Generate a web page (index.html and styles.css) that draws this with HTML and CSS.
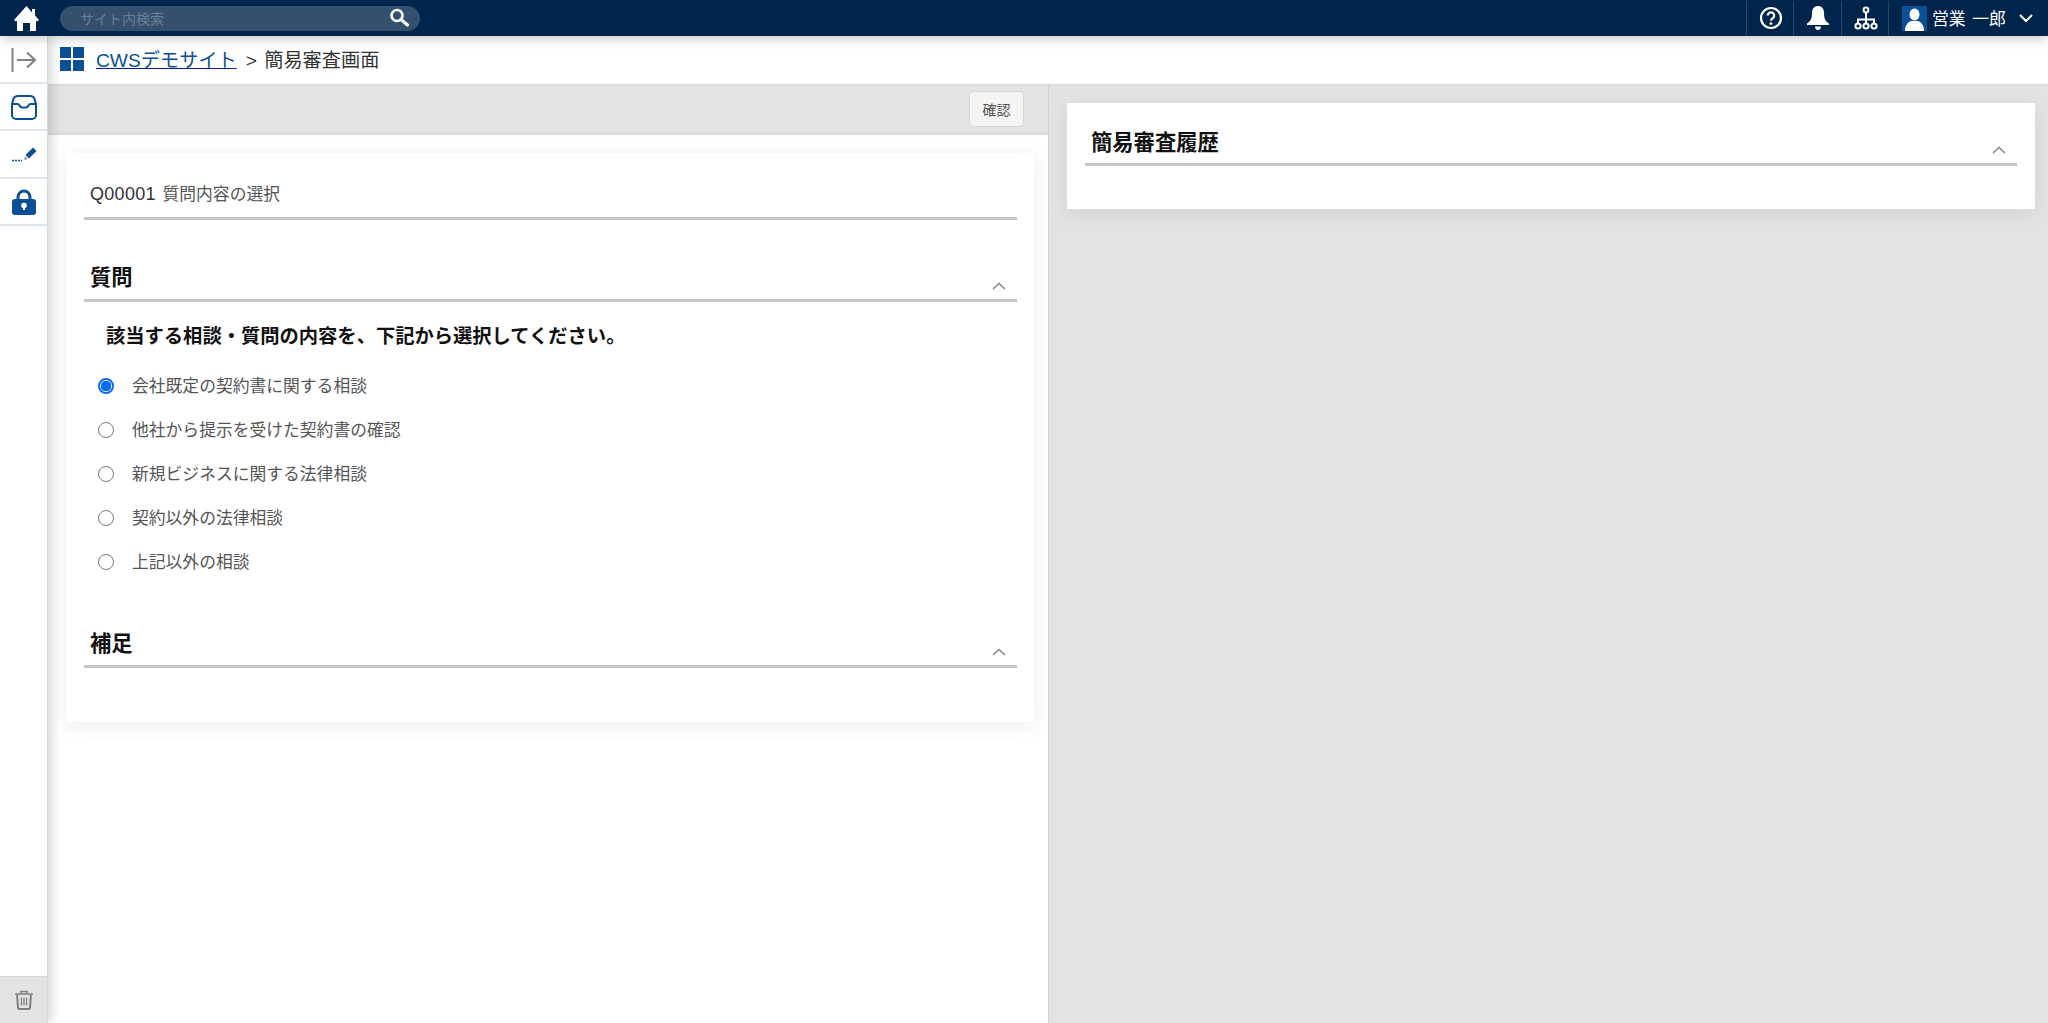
FILE: index.html
```html
<!DOCTYPE html>
<html lang="ja">
<head>
    <meta charset="UTF-8">
    <title>簡易審査画面</title>
    <link rel="stylesheet" href="styles.css">
</head>
<body>
    <header class="topbar">
        <a class="home">
            <svg width="27" height="27" viewBox="0 0 27 27"><path fill="#fff" d="M13.500 1 1 15l2 1.500 1-1V26h6v-8h7v8h6V15.500l1 1 2-1.500-4-4.500V4h-3v3.500z"/></svg>
        </a>
        <div class="search">
            <span class="search-text">サイト内検索</span>
            <svg width="22" height="22" viewBox="0 0 22 22"><circle cx="9" cy="8.500" r="5.500" fill="none" stroke="#fff" stroke-width="2.600"/><path d="M13 12.500l6.500 5.500" stroke="#fff" stroke-width="3.200" stroke-linecap="round"/></svg>
        </div>
        <div class="top-icons">
            <div class="top-icon">
                <svg width="24" height="24" viewBox="0 0 24 24"><circle cx="12" cy="12" r="10" fill="none" stroke="#fff" stroke-width="2.200"/><path d="M8.800 9.500a3.200 3.200 0 1 1 4.800 2.800c-1 .6-1.600 1.100-1.600 2.400" fill="none" stroke="#fff" stroke-width="2.200"/><circle cx="12" cy="17.600" r="1.400" fill="#fff"/></svg>
            </div>
            <div class="top-icon">
                <svg width="24" height="26" viewBox="0 0 24 26"><path fill="#fff" d="M12 1c-4 0-6 3-6 7 0 5-1 8-5 10.500V20h22v-1.500c-4-2.500-5-5.500-5-10.500 0-4-2-7-6-7z"/><path fill="#fff" d="M9 21.500h6c0 2-1.300 3.500-3 3.500s-3-1.500-3-3.500z"/></svg>
            </div>
            <div class="top-icon">
                <svg width="24" height="24" viewBox="0 0 24 24" fill="none" stroke="#fff" stroke-width="2"><circle cx="12" cy="4" r="2.400"/><circle cx="4" cy="20" r="2.600"/><circle cx="12" cy="20" r="2.600"/><circle cx="20" cy="20" r="2.600"/><path d="M12 6.500v11M4 17.500v-4h16v4"/></svg>
            </div>
            <div class="user">
                <svg class="avatar" width="25" height="25" viewBox="0 0 25 25"><rect width="25" height="25" fill="#0b4f96"/><ellipse cx="12.500" cy="8.500" rx="5" ry="6" fill="#fff"/><path fill="#fff" d="M3 25c0-6 3-9 6-10h7c3 1 6 4 6 10z"/></svg>
                <span class="user-name">営業 一郎</span>
                <svg width="16" height="10" viewBox="0 0 16 10"><path d="M2 2l6 6 6-6" fill="none" stroke="#fff" stroke-width="2"/></svg>
            </div>
        </div>
    </header>

    <div class="main">
        <nav class="sidebar">
            <div class="side-item">
                <svg width="26" height="26" viewBox="0 0 26 26" fill="none"><path d="M1.500 1v24" stroke="#8a7f7a" stroke-width="2"/><path d="M6 13h18M16 5.500l8 7.500-8 7.500" stroke="#808080" stroke-width="2"/></svg>
            </div>
            <div class="side-item">
                <svg width="26" height="26" viewBox="0 0 26 26" fill="none" stroke="#0b4f96" stroke-width="2"><path d="M7 2h12c2.500 0 4 1 4.600 3L25 10v11a4 4 0 0 1-4 4H5a4 4 0 0 1-4-4V10l1.400-5C3 3 4.500 2 7 2z"/><path d="M1 10h5.500c1 0 1.500.6 2 1.500.6 1.300 1.500 2 2.500 2h4c1 0 1.900-.7 2.500-2 .5-.9 1-1.500 2-1.500H25"/></svg>
            </div>
            <div class="side-item">
                <svg width="26" height="20" viewBox="0 0 26 20"><path fill="#0b4f96" d="M14.500 10 22 2.500l3.500 3.500-7.500 7.500z"/><path fill="#8fa3bc" d="M14 11l3 3-4 1.300z"/><path d="M1 15.500h10" stroke="#0b4f96" stroke-width="1.300" stroke-dasharray="2 1"/></svg>
            </div>
            <div class="side-item">
                <svg width="24" height="26" viewBox="0 0 24 26"><path d="M6 11V8a6 6 0 0 1 12 0v3" fill="none" stroke="#0b4f96" stroke-width="3"/><rect y="10" width="24" height="16" rx="3" fill="#0b4f96"/><circle cx="12" cy="16.500" r="2.800" fill="#fff"/><path d="M11 18h2v3h-2z" fill="#fff"/></svg>
            </div>
            <div class="side-trash">
                <svg width="20" height="20" viewBox="0 0 20 20" fill="none" stroke="#808080"><path d="M1 4h18M7 3V1.500h6V3" stroke-width="1.500"/><path d="M3 4.500l1 13c0 .8.600 1.500 1.500 1.500h9c.9 0 1.500-.7 1.500-1.500l1-13" stroke-width="2"/><path d="M7.500 7.500v8M10 7.500v8M12.500 7.500v8" stroke-width="1.200"/></svg>
            </div>
        </nav>

        <div class="content">
            <div class="breadcrumb">
                <svg class="logo" width="24" height="24" viewBox="0 0 24 24" fill="#0b4f96"><rect width="11" height="11"/><rect x="13" width="11" height="11"/><rect y="13" width="11" height="11"/><rect x="13" y="13" width="11" height="11"/></svg>
                <a class="crumb-link">CWSデモサイト</a>
                <span class="crumb-current">&gt; 簡易審査画面</span>
            </div>

            <div class="panes">
                <section class="pane-left">
                    <div class="toolbar">
                        <button class="btn-confirm">確認</button>
                    </div>
                    <div class="pane-body">
                        <div class="card card-form">
                            <div class="form-title"><span class="code">Q00001</span> 質問内容の選択</div>

                            <div class="section-head">
                                <h2>質問</h2>
                                <svg class="chevron" width="14" height="8" viewBox="0 0 14 8"><path d="M1 7l6-5.500L13 7" fill="none" stroke="#808080" stroke-width="1.300"/></svg>
                            </div>
                            <p class="question">該当する相談・質問の内容を、下記から選択してください。</p>
                            <ul class="options">
                                <li><span class="radio checked"></span>会社既定の契約書に関する相談</li>
                                <li><span class="radio"></span>他社から提示を受けた契約書の確認</li>
                                <li><span class="radio"></span>新規ビジネスに関する法律相談</li>
                                <li><span class="radio"></span>契約以外の法律相談</li>
                                <li><span class="radio"></span>上記以外の相談</li>
                            </ul>

                            <div class="section-head section-extra">
                                <h2>補足</h2>
                                <svg class="chevron" width="14" height="8" viewBox="0 0 14 8"><path d="M1 7l6-5.500L13 7" fill="none" stroke="#808080" stroke-width="1.300"/></svg>
                            </div>
                        </div>
                    </div>
                </section>

                <section class="pane-right">
                    <div class="card card-history">
                        <div class="section-head history-head">
                            <h2>簡易審査履歴</h2>
                            <svg class="chevron" width="14" height="8" viewBox="0 0 14 8"><path d="M1 7l6-5.500L13 7" fill="none" stroke="#808080" stroke-width="1.300"/></svg>
                        </div>
                    </div>
                </section>
            </div>
        </div>
    </div>
</body>
</html>
```

FILE: styles.css
```css
* {
    box-sizing: border-box;
}
html, body {
    height: 100%;
}
body {
    margin: 0;
    display: flex;
    flex-direction: column;
    overflow: hidden;
    font-family: "Liberation Sans", "Noto Sans CJK JP", sans-serif;
    color: #555555;
    background: #ffffff;
}

/* top bar */
.topbar {
    height: 36px;
    flex: none;
    display: flex;
    align-items: center;
    background: #00254d;
    position: relative;
    z-index: 3;
    box-shadow: 0 3px 10px rgba(0, 0, 0, 0.2);
}
.home {
    width: 52px;
    padding-left: 13px;
    display: flex;
}
.search {
    width: 360px;
    height: 25px;
    margin-left: 8px;
    padding: 0 10px 0 20px;
    display: flex;
    align-items: center;
    justify-content: space-between;
    border-radius: 13px;
    background: #34506e;
}
.search-text {
    font-size: 14px;
    color: #6b7f94;
}
.top-icons {
    margin-left: auto;
    height: 35px;
    display: flex;
}
.top-icon {
    width: 47.500px;
    padding-left: 2px;
    display: flex;
    align-items: center;
    justify-content: center;
    border-left: 1px solid #2a4766;
}
.user {
    width: 160px;
    padding-left: 13px;
    display: flex;
    align-items: center;
    border-left: 1px solid #2a4766;
}
.user-name {
    margin: 0 12px 0 5px;
    font-size: 16.800px;
    word-spacing: 2px;
    color: #ffffff;
    white-space: nowrap;
}

/* sidebar */
.main {
    flex: 1;
    display: flex;
    min-height: 0;
}
.sidebar {
    width: 48px;
    flex: none;
    display: flex;
    flex-direction: column;
    background: #ffffff;
    border-right: 1px solid #d5dbe3;
    position: relative;
    z-index: 2;
    box-shadow: 4px 0 10px rgba(0, 0, 0, 0.15);
}
.side-item {
    height: 47.500px;
    padding-top: 2px;
    display: flex;
    align-items: center;
    justify-content: center;
    border-bottom: 2px solid #dfe6ee;
}
.side-trash {
    margin-top: auto;
    height: 47px;
    display: flex;
    align-items: center;
    justify-content: center;
    background: #e3e3e3;
    border-top: 1px solid #d5dbe3;
}

/* breadcrumb */
.content {
    flex: 1;
    min-width: 0;
    display: flex;
    flex-direction: column;
}
.breadcrumb {
    height: 50px;
    flex: none;
    padding: 0 0 3px 12px;
    display: flex;
    align-items: center;
    border-bottom: 2px solid #dcdcdc;
    font-size: 19.200px;
}
.crumb-link {
    margin-left: 12px;
    color: #0b4f96;
    text-decoration: underline;
    text-decoration-color: #00247d;
}
.crumb-current {
    margin-left: 9px;
    word-spacing: 2px;
    color: #333333;
}

/* panes */
.panes {
    flex: 1;
    display: flex;
    min-height: 0;
}
.pane-left {
    width: 1000px;
    flex: none;
    display: flex;
    flex-direction: column;
    background: #ffffff;
}
.toolbar {
    height: 49px;
    flex: none;
    padding: 5px 24px 0 0;
    display: flex;
    justify-content: flex-end;
    align-items: flex-start;
    background: #e3e3e3;
    border-bottom: 2px solid #dcdcdc;
}
.btn-confirm {
    width: 55px;
    height: 36px;
    padding: 0;
    font-family: inherit;
    font-size: 14px;
    color: #555555;
    background: #f4f4f4;
    border: 1px solid #d8d8d8;
    border-radius: 5px;
}
.pane-body {
    flex: 1;
    padding: 18px 14px 0 18px;
}
.pane-right {
    flex: 1;
    padding: 17px 13px 0 18px;
    background: #e3e3e3;
    border-left: 1px solid #c8d2de;
}

/* cards */
.card {
    background: #ffffff;
    box-shadow: 0 4px 20px rgba(0, 0, 0, 0.08);
}
.card-form {
    height: 569px;
    padding: 0 17px 0 18px;
}
.card-history {
    height: 106px;
    padding: 0 18px;
}
.form-title {
    height: 67px;
    padding: 28px 0 0 6px;
    font-size: 16.800px;
    border-bottom: 3px solid #c8c8c8;
}
.code {
    margin-right: 2px;
    font-size: 18px;
    letter-spacing: 0.3px;
    color: #333333;
}
.section-head {
    height: 44px;
    margin-top: 38px;
    padding: 0 0 7px 6px;
    display: flex;
    justify-content: space-between;
    align-items: center;
    border-bottom: 3px solid #c8c8c8;
}
.section-head h2 {
    margin: 0;
    font-size: 21.300px;
    font-weight: bold;
    color: #111111;
}
.chevron {
    align-self: flex-end;
    margin: 0 11px 2px 0;
}
.section-extra {
    margin-top: 41px;
}
.history-head {
    margin-top: 0;
    height: 63px;
    padding-top: 22px;
}
.question {
    margin: 19px 0 0 22px;
    font-size: 19.300px;
    font-weight: bold;
    color: #111111;
}
.options {
    list-style: none;
    margin: 14px 0 0 0;
    padding: 0;
}
.options li {
    height: 44px;
    padding-left: 14px;
    display: flex;
    align-items: center;
    font-size: 16.800px;
}
.radio {
    width: 16px;
    height: 16px;
    margin: 1px 18px 0 0;
    flex: none;
    border: 1px solid #767676;
    border-radius: 50%;
    background: #ffffff;
}
.radio.checked {
    border: 2px solid #0a6cf0;
    background: radial-gradient(circle, #0a6cf0 0 5px, #ffffff 5.500px);
}
```
